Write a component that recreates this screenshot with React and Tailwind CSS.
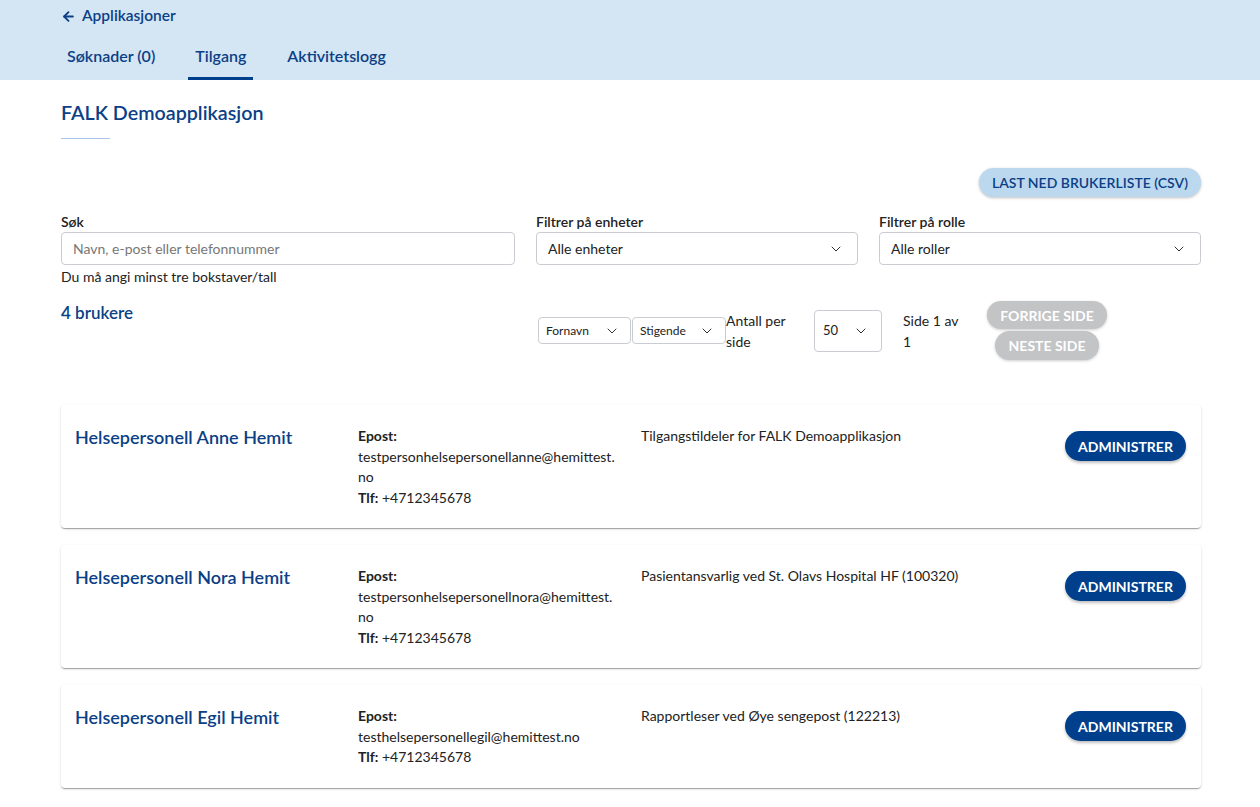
import React from "react";
import { ArrowLeft, ChevronDown } from "lucide-react";

const users = [
  {
    name: "Helsepersonell Anne Hemit",
    emailA: "testpersonhelsepersonellanne@hemittest.",
    emailB: "no",
    tlf: "+4712345678",
    role: "Tilgangstildeler for FALK Demoapplikasjon",
  },
  {
    name: "Helsepersonell Nora Hemit",
    emailA: "testpersonhelsepersonellnora@hemittest.",
    emailB: "no",
    tlf: "+4712345678",
    role: "Pasientansvarlig ved St. Olavs Hospital HF (100320)",
  },
  {
    name: "Helsepersonell Egil Hemit",
    emailA: "testhelsepersonellegil@hemittest.",
    emailB: "no",
    tlf: "+4712345678",
    role: "Rapportleser ved Øye sengepost (122213)",
  },
];

function Select({ label, className }) {
  return (
    <div
      className={
        "flex items-center justify-between rounded-[4px] border border-[#c9ccd1] bg-white " +
        className
      }
    >
      <span>{label}</span>
      <ChevronDown size={16} strokeWidth={1.5} className="text-[#333]" />
    </div>
  );
}

export default function App() {
  return (
    <div className="min-h-[807px] bg-white font-['Lato',sans-serif] text-[#222]">
      <header className="h-[80px] bg-[#d4e6f3] px-[61px]">
        <div className="flex h-[31px] items-center gap-[6px] pt-[1px] text-[15.5px] font-semibold text-[#0b3f86]">
          <ArrowLeft size={15} strokeWidth={3} />
          <span>Applikasjoner</span>
        </div>
        <nav className="flex h-[49px] items-stretch gap-[27px] text-[16px] font-semibold text-[#0b3f86]">
          <div className="flex items-center border-b-[3px] border-transparent px-[6px] pt-[3px]">Søknader (0)</div>
          <div className="flex items-center border-b-[3px] border-[#003f8c] px-[7px] pt-[3px]">
            Tilgang
          </div>
          <div className="flex items-center border-b-[3px] border-transparent px-[7px] pt-[3px]">Aktivitetslogg</div>
        </nav>
      </header>

      <main className="pl-[61px] pr-[59px]">
        <h1 className="pt-[20px] text-[19.7px] font-semibold leading-[26px] text-[#0b3f86]">
          FALK Demoapplikasjon
        </h1>
        <div className="mt-[12px] h-[1px] w-[49px] bg-[#a9c6e8]" />

        <div className="mt-[29px] flex justify-end">
          <button className="h-[29px] w-[222px] rounded-full bg-[#bcd8ee] text-[14px] font-semibold text-[#0b3f86] shadow-[0_1px_3px_rgba(0,0,0,0.25)]">
            LAST NED BRUKERLISTE (CSV)
          </button>
        </div>

        <div className="mt-[15px] grid grid-cols-[454px_322px_322px] gap-x-[21px] text-[14px]">
          <div>
            <div className="h-[20px] font-semibold leading-[20px]">Søk</div>
            <div className="flex h-[33px] items-center rounded-[4px] border border-[#c9ccd1] px-[11px] text-[#777]">
              Navn, e-post eller telefonnummer
            </div>
            <div className="mt-[2px] leading-[20px]">Du må angi minst tre bokstaver/tall</div>
          </div>
          <div>
            <div className="h-[20px] font-semibold leading-[20px]">Filtrer på enheter</div>
            <Select label="Alle enheter" className="h-[33px] px-[11px] pr-[13px]" />
          </div>
          <div>
            <div className="h-[20px] font-semibold leading-[20px]">Filtrer på rolle</div>
            <Select label="Alle roller" className="h-[33px] px-[11px] pr-[13px]" />
          </div>
        </div>

        <div className="mt-[13px] flex items-start">
          <div className="w-[477px] pt-[1px] text-[17px] font-semibold leading-[24px] text-[#0b3f86]">
            4 brukere
          </div>
          <div className="mt-[1px] flex items-center text-[14px]">
            <Select label="Fornavn" className="h-[27px] w-[93px] pl-[7px] pr-[10px] text-[12px]" />
            <Select label="Stigende" className="ml-[1px] h-[27px] w-[94px] pl-[7px] pr-[10px] text-[12px]" />
            <div className="w-[88px] pr-[22px] leading-[21px]">Antall per side</div>
            <Select label="50" className="h-[42px] w-[68px] pl-[8px] pr-[12px] text-[13px]" />
            <div className="ml-[21px] w-[62px] leading-[21px]">Side 1 av 1</div>
            <div className="ml-[22px] flex flex-col items-center gap-[2px]">
              <button className="h-[28px] w-[120px] rounded-full bg-[#c2c4c6] text-[14px] font-bold text-white shadow-[0_1px_3px_rgba(0,0,0,0.2)]">
                FORRIGE SIDE
              </button>
              <button className="h-[29px] w-[104px] rounded-full bg-[#c2c4c6] text-[14px] font-bold text-white shadow-[0_1px_3px_rgba(0,0,0,0.2)]">
                NESTE SIDE
              </button>
            </div>
          </div>
        </div>

        <div className="mt-[45px] flex flex-col gap-[17px] pb-[20px]">
          {users.map((u) => (
            <div
              key={u.name}
              className="grid grid-cols-[283px_283px_1fr_auto] rounded-[4px] bg-white pb-[20px] pl-[14px] pr-[15px] pt-[21px] shadow-[0_2px_1px_-1px_rgba(0,0,0,0.2),0_1px_1px_0_rgba(0,0,0,0.14),0_1px_3px_0_rgba(0,0,0,0.12)]"
            >
              <div className="text-[18px] font-semibold leading-[22px] text-[#0b3f86]">{u.name}</div>
              <div className="w-[268px] text-[14px] leading-[20.5px]">
                <div className="font-bold">Epost:</div>
                <div className="break-words">
                  {u.emailA}
                  <wbr />
                  {u.emailB}
                </div>
                <div>
                  <span className="font-bold">Tlf:</span> {u.tlf}
                </div>
              </div>
              <div className="text-[14px] leading-[20.5px]">{u.role}</div>
              <div className="pt-[5px]">
                <button className="h-[30px] w-[121px] rounded-full bg-[#003f8c] text-[14px] font-bold text-white shadow-[0_2px_3px_rgba(0,0,0,0.25)]">
                  ADMINISTRER
                </button>
              </div>
            </div>
          ))}
        </div>
      </main>
    </div>
  );
}
